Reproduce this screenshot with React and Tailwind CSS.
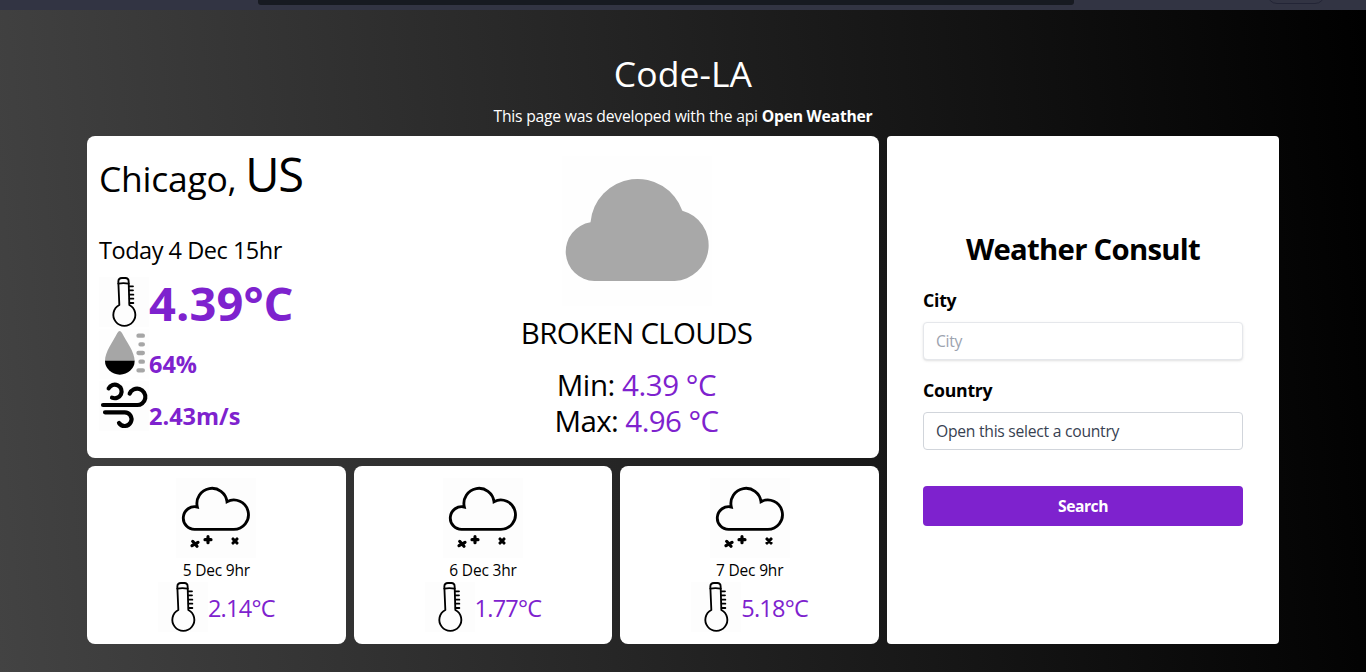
import React from "react";

function Thermometer() {
  return (
    <svg viewBox="0 0 150 150" className="block size-[50px] shrink-0 bg-[#fdfdfd]" fill="none" stroke="#000" strokeWidth="5.500" strokeLinecap="round" strokeLinejoin="round">
      <path d="M61 84L58 14Q58 3 69 3H79Q89 3 89 14L91 84A33 33 0 1 1 61 84Z" />
      <path d="M58 20Q73 17 89 20" />
      <path d="M91 28H102M91 40H102M92 53H103M92 65H103M92 78H103" />
    </svg>
  );
}

function Humidity() {
  return (
    <svg viewBox="0 0 150 150" className="block size-[50px] shrink-0 bg-[#fefefe]">
      <path d="M18 96C18 68 42 38 55 12Q62 0 69 12C82 38 107 68 107 96Z" fill="#a6a6a6" />
      <path d="M18 95H107A44.500 42 0 0 1 18 95Z" fill="#000" />
      <path d="M118.500 20H131.500M124.500 46H131.500M118.500 72H131.500M124.500 98H131.500M118.500 124H131.500" stroke="#a6a6a6" strokeWidth="13" strokeLinecap="round" />
    </svg>
  );
}

function Wind() {
  return (
    <svg viewBox="0 0 150 150" className="block size-[50px] shrink-0 bg-[#fdfdfd]" fill="none" stroke="#000" strokeWidth="12.500" strokeLinecap="round">
      <path d="M12 72H113A24.500 24.500 0 1 0 92 38" />
      <path d="M29 22A20.500 20.500 0 1 1 39 50" />
      <path d="M18 94H76A20.500 20.500 0 1 1 60 126" />
    </svg>
  );
}

function BrokenClouds() {
  return (
    <svg viewBox="0 0 450 450" className="block size-[150px] bg-[#fefefe]">
      <path d="M97 375A88.600 88.600 0 0 1 85.500 199A142 142 0 0 1 361 164A107.500 107.500 0 0 1 338 375Z" fill="#a8a8a8" />
    </svg>
  );
}

function SnowCloud() {
  return (
    <svg viewBox="0 0 240 240" className="block size-[80px] bg-[#fdfdfd]" fill="none" stroke="#000" strokeLinecap="round">
      <path strokeWidth="8.500" strokeLinejoin="miter" d="M57 154A34 34 0 1 1 64 87A45.300 45.300 0 1 1 153 71A44 44 0 1 1 173 154Z" />
      <path strokeWidth="9.500" d="M50 190L63 205M48 203L66 193M96 176V194M87 185H105M171 183L183 195M183 183L171 195" />
    </svg>
  );
}

function Forecast({ date, temp }) {
  return (
    <article className="flex h-[178px] flex-col items-center rounded-lg bg-white pt-3">
      <SnowCloud />
      <p className="h-6 text-[15.5px] leading-6 tracking-[-0.012em]">{date}</p>
      <div className="flex">
        <Thermometer />
        <p className="mt-[10px] text-[23.5px] leading-8 tracking-[-0.032em] text-[#7e22ce]">{temp}</p>
      </div>
    </article>
  );
}

const forecasts = [
  { date: "5 Dec 9hr", temp: "2.14°C" },
  { date: "6 Dec 3hr", temp: "1.77°C" },
  { date: "7 Dec 9hr", temp: "5.18°C" },
];

export default function App() {
  return (
    <div className="flex h-[672px] w-full flex-col overflow-hidden font-['Open_Sans','Noto_Sans',sans-serif] text-black">
      <div className="flex h-[10px] shrink-0 overflow-hidden bg-[#323443] pl-[258px]">
        <div className="h-[5px] w-[816px] rounded-b-[3px] bg-[#171a21]" />
        <div className="-mt-4 ml-[193px] h-5 w-[58px] rounded-full border border-[#232536]" />
      </div>
      <div className="flex flex-1 flex-col items-center bg-[linear-gradient(85deg,#434343_0%,#000000_100%)]">
        <header className="flex h-[126px] flex-col items-center pt-[43px] text-white">
          <h1 className="text-[35.5px] leading-10 tracking-[0.002em]">Code-LA</h1>
          <p className="mt-[11px] whitespace-nowrap text-[15.7px] leading-6 tracking-[-0.014em]">
            This page was developed with the api <strong className="font-bold">Open Weather</strong>
          </p>
        </header>
        <main className="flex h-[508px] w-[1192px] gap-2">
          <div className="flex w-[792px] flex-col gap-2">
            <section className="flex h-[322px] rounded-lg bg-white">
              <div className="w-[307px] pl-3 pt-[14px]">
                <h2 className="h-12 whitespace-nowrap text-[35.5px] leading-[48px] tracking-[-0.008em]">
                  Chicago, <span className="text-[47px] leading-[48px] tracking-[-0.03em]">US</span>
                </h2>
                <p className="mt-[36px] text-[23.5px] leading-8 tracking-[-0.02em]">Today 4 Dec 15hr</p>
                <div className="mt-[11px] flex h-[52px] font-bold text-[#7e22ce]">
                  <Thermometer />
                  <p className="mt-[2px] text-[47px] leading-[48px] tracking-[0.002em]">4.39°C</p>
                </div>
                <div className="flex h-[52px] font-bold text-[#7e22ce]">
                  <Humidity />
                  <p className="mt-[19px] text-[23.5px] leading-8 tracking-[0em]">64%</p>
                </div>
                <div className="flex h-[52px] font-bold text-[#7e22ce]">
                  <Wind />
                  <p className="mt-[19px] text-[23.5px] leading-8 tracking-[0em]">2.43m/s</p>
                </div>
              </div>
              <div className="flex flex-1 flex-col items-center pt-5">
                <BrokenClouds />
                <p className="mt-[9px] text-[29.5px] leading-9 tracking-[-0.024em]">BROKEN CLOUDS</p>
                <p className="mt-4 text-[29.5px] leading-9 tracking-[-0.015em]">
                  Min: <span className="text-[#7e22ce]">4.39 °C</span>
                </p>
                <p className="text-[29.5px] leading-9 tracking-[-0.02em]">
                  Max: <span className="text-[#7e22ce]">4.96 °C</span>
                </p>
              </div>
            </section>
            <section className="grid grid-cols-3 gap-2">
              {forecasts.map((item) => (
                <Forecast key={item.date} date={item.date} temp={item.temp} />
              ))}
            </section>
          </div>
          <form className="flex w-[392px] flex-col rounded bg-white px-9 pt-[95px]" onSubmit={(e) => e.preventDefault()}>
            <h2 className="text-center text-[29.3px] leading-9 font-bold tracking-[-0.025em]">Weather Consult</h2>
            <label htmlFor="city" className="mt-[19px] text-[17.7px] leading-7 font-bold tracking-[-0.015em]">City</label>
            <input id="city" placeholder="City" className="mt-2 h-[38px] rounded border border-[#e5e7eb] bg-white px-3 text-[15.7px] tracking-[-0.02em] shadow-sm outline-none placeholder:text-[#9ca3af]" />
            <label htmlFor="country" className="mt-4 text-[17.7px] leading-7 font-bold tracking-[-0.015em]">Country</label>
            <select id="country" className="mt-2 h-[38px] appearance-none rounded border border-[#d1d5db] bg-white px-3 pt-0.5 text-[15.7px] tracking-[-0.017em] text-[#374151] outline-none">
              <option>Open this select a country</option>
            </select>
            <button type="submit" className="mt-9 h-10 rounded bg-[#7e22ce] pt-0.5 text-[15.7px] font-bold tracking-[-0.03em] text-white">Search</button>
          </form>
        </main>
      </div>
    </div>
  );
}
